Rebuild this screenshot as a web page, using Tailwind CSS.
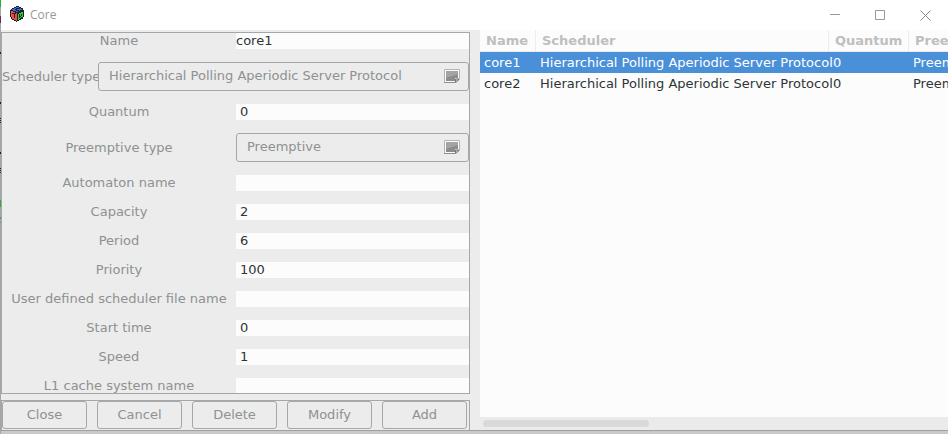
<!DOCTYPE html>
<html lang="en">
<head>
<meta charset="utf-8">
<meta name="viewport" content="width=device-width, initial-scale=1">
<title>Core</title>
<script src="https://cdn.jsdelivr.net/npm/@tailwindcss/browser@4"></script>
</head>
<body class="h-screen overflow-hidden bg-[#c9c9c9] font-['DejaVu_Sans',sans-serif] text-[13px] leading-4 text-[#8e9192]">
<svg class="absolute left-0 top-0 z-10 h-[434px] w-px" viewBox="0 0 1 434" preserveAspectRatio="none" shape-rendering="crispEdges" aria-hidden="true">
  <path fill="#a6a6a6" d="M0 0h1v434H0z"/>
  <path fill="#2bb02b" d="M0 0h1v7H0zM0 200h1v7H0z"/>
  <path fill="#6b2860" d="M0 16h1v7H0z"/>
  <path fill="#222" d="M0 52h1v2H0zM0 102h1v2H0zM0 118h1v1H0zM0 120h1v1H0zM0 122h1v1H0zM0 152h1v2H0zM0 168h1v1H0zM0 170h1v1H0zM0 172h1v1H0z"/>
  <path fill="#4b8db5" d="M0 217h1v2H0zM0 222h1v1H0z"/>
</svg>
<div class="flex h-full flex-col pb-[3px] pl-px">
  <header class="flex h-[30px] shrink-0 items-center bg-white pl-2">
    <svg class="-mt-[2px] h-4 w-4" viewBox="0 0 16 16" shape-rendering="crispEdges" aria-hidden="true">
      <path fill="#1d2228" d="M7 0h3v1h2v1h2v2h1v7h-1v2h-2v1h-2v1H8v1H7v-1H5v-1H3v-1H2v-2H1V4h1V3h1V2h2V1h2z"/>
      <path fill="#3d6fd6" d="M7 1h3v1h2v1h1v1h-2v1H9v1H7V5H4V4H3V3h2V2h2z"/>
      <path fill="#15234a" d="M7 2h4v1H8v1h2v1H7V4H6V3h1z"/>
      <path fill="#e8504b" d="M2 5h2v1h2v1h2v8H7v-1H5v-1H3v-2H2z"/>
      <path fill="#4b1212" d="M3 7h4v1H6v4H5V8H3z"/>
      <path fill="#2fd236" d="M9 8h1V7h2V6h2v5h-1v1h-2v1h-1v1H9z"/>
      <path fill="#123c16" d="M10 8h1v2h1V8h1v2h-1v1h1v1h-1v-1h-1v1h-1z"/>
    </svg>
    <h1 class="ml-[5px] flex-1 font-['Open_Sans','Noto_Sans',sans-serif] text-[12px] font-normal text-[#999]">Core</h1>
    <button type="button" aria-label="Minimize" class="flex h-full w-[45px] items-center justify-center">
      <svg class="h-[11px] w-[11px]" viewBox="0 0 11 11" fill="none" stroke="#999"><path d="M0 4.500h10"/></svg>
    </button>
    <button type="button" aria-label="Maximize" class="flex h-full w-[45px] items-center justify-center">
      <svg class="h-[11px] w-[11px]" viewBox="0 0 11 11" fill="none" stroke="#999"><path d="M.5.5h9v9h-9z"/></svg>
    </button>
    <button type="button" aria-label="Close window" class="flex h-full w-[45px] items-center justify-center">
      <svg class="h-[11px] w-[11px]" viewBox="0 0 11 11" fill="none" stroke="#888"><path d="M.5.5l10 10M10.500.5l-10 10"/></svg>
    </button>
  </header>

  <main class="flex min-h-0 flex-1 gap-[10px] border-b border-[#a0a0a0] bg-[#ececec]">
    <form class="flex w-[469px] shrink-0 flex-col gap-[6px] pt-[2px]">
      <div class="flex min-h-0 flex-1 flex-col gap-[13px] overflow-hidden border border-[#a6a8a8]">
        <div class="flex shrink-0 items-center"><label for="name" class="flex-1 text-center">Name</label><input id="name" value="core1" class="h-4 w-[233px] bg-[#fcfcfc] text-[#2e3436] outline-none"></div>
        <div class="flex shrink-0 items-center">
          <label for="sched" class="w-24 shrink-0 whitespace-nowrap">Scheduler type</label>
          <div class="relative flex-1">
            <select id="sched" class="block h-[29px] w-full appearance-none rounded-[3px] border border-[#a6a8a8] bg-[#ececec] px-[10px] pb-[2px] text-[#8e9192] outline-none"><option>Hierarchical Polling Aperiodic Server Protocol</option></select>
            <svg class="pointer-events-none absolute right-[9px] top-[7px] h-[15px] w-4" viewBox="0 0 16 15" aria-hidden="true"><path fill="#fafafa" stroke="#b4b6b4" d="M.5.5h15v10l-3 3H.5z"/><path fill="#8a8d8b" d="M2 2h12v7h-3v3H2z"/><path fill="#a2a5a3" d="M2 2h12v3L2 9z"/><path fill="#d4d6d4" stroke="#737573" d="M11.500 13v-3h3.500z"/><path stroke="#8d8f8d" d="M0 13.500h12"/></svg>
          </div>
        </div>
        <div class="flex shrink-0 items-center"><label for="quantum" class="flex-1 text-center">Quantum</label><input id="quantum" value="0" class="h-4 w-[233px] bg-[#fcfcfc] px-1 text-[#2e3436] outline-none"></div>
        <div class="flex shrink-0 items-center">
          <label for="preempt" class="flex-1 text-center">Preemptive type</label>
          <div class="relative w-[233px]">
            <select id="preempt" class="block h-[29px] w-full appearance-none rounded-[3px] border border-[#a6a8a8] bg-[#ececec] px-[10px] pb-[2px] text-[#8e9192] outline-none"><option>Preemptive</option></select>
            <svg class="pointer-events-none absolute right-[9px] top-[7px] h-[15px] w-4" viewBox="0 0 16 15" aria-hidden="true"><path fill="#fafafa" stroke="#b4b6b4" d="M.5.5h15v10l-3 3H.5z"/><path fill="#8a8d8b" d="M2 2h12v7h-3v3H2z"/><path fill="#a2a5a3" d="M2 2h12v3L2 9z"/><path fill="#d4d6d4" stroke="#737573" d="M11.500 13v-3h3.500z"/><path stroke="#8d8f8d" d="M0 13.500h12"/></svg>
          </div>
        </div>
        <div class="flex shrink-0 items-center"><label for="automaton" class="flex-1 text-center">Automaton name</label><input id="automaton" class="h-4 w-[233px] bg-[#fcfcfc] px-1 text-[#2e3436] outline-none"></div>
        <div class="flex shrink-0 items-center"><label for="capacity" class="flex-1 text-center">Capacity</label><input id="capacity" value="2" class="h-4 w-[233px] bg-[#fcfcfc] px-1 text-[#2e3436] outline-none"></div>
        <div class="flex shrink-0 items-center"><label for="period" class="flex-1 text-center">Period</label><input id="period" value="6" class="h-4 w-[233px] bg-[#fcfcfc] px-1 text-[#2e3436] outline-none"></div>
        <div class="flex shrink-0 items-center"><label for="priority" class="flex-1 text-center">Priority</label><input id="priority" value="100" class="h-4 w-[233px] bg-[#fcfcfc] px-1 text-[#2e3436] outline-none"></div>
        <div class="flex shrink-0 items-center"><label for="userfile" class="flex-1 text-center">User defined scheduler file name</label><input id="userfile" class="h-4 w-[233px] bg-[#fcfcfc] px-1 text-[#2e3436] outline-none"></div>
        <div class="flex shrink-0 items-center"><label for="start" class="flex-1 text-center">Start time</label><input id="start" value="0" class="h-4 w-[233px] bg-[#fcfcfc] px-1 text-[#2e3436] outline-none"></div>
        <div class="flex shrink-0 items-center"><label for="speed" class="flex-1 text-center">Speed</label><input id="speed" value="1" class="h-4 w-[233px] bg-[#fcfcfc] px-1 text-[#2e3436] outline-none"></div>
        <div class="flex shrink-0 items-center"><label for="cache" class="flex-1 text-center">L1 cache system name</label><input id="cache" class="h-4 w-[233px] bg-[#fcfcfc] px-1 text-[#2e3436] outline-none"></div>
      </div>
      <div class="flex shrink-0 gap-[10px] border border-b-0 border-[#a6a8a8] pb-px pr-[2px]">
        <button type="button" class="h-7 flex-1 rounded-[3px] border border-[#a6a8a8]">Close</button>
        <button type="button" class="h-7 flex-1 rounded-[3px] border border-[#a6a8a8]">Cancel</button>
        <button type="button" class="h-7 flex-1 rounded-[3px] border border-[#a6a8a8]">Delete</button>
        <button type="button" class="h-7 flex-1 rounded-[3px] border border-[#a6a8a8]">Modify</button>
        <button type="button" class="h-7 flex-1 rounded-[3px] border border-[#a6a8a8]">Add</button>
      </div>
    </form>

    <section class="flex min-w-0 flex-1 flex-col">
      <div class="min-h-0 flex-1 overflow-hidden bg-[#fcfcfc]">
        <table class="w-[520px] table-fixed border-separate border-spacing-0 whitespace-nowrap text-left text-[#2e3436]">
          <colgroup><col class="w-[56px]"><col class="w-[293px]"><col class="w-[80px]"><col></colgroup>
          <thead>
            <tr class="h-[22px] text-[#bebfbf]">
              <th class="border-b border-r border-[#ececec] p-0 pl-[6px] font-bold">Name</th>
              <th class="border-b border-r border-[#ececec] p-0 pl-[6px] font-bold">Scheduler</th>
              <th class="border-b border-r border-[#ececec] p-0 pl-[6px] font-bold">Quantum</th>
              <th class="border-b border-[#ececec] p-0 pl-[6px] font-bold">Preemptive</th>
            </tr>
          </thead>
          <tbody>
            <tr class="h-[21px] bg-[#4a90d9] text-white"><td class="p-0 pl-1">core1</td><td class="p-0 pl-1">Hierarchical Polling Aperiodic Server Protocol</td><td class="p-0 pl-1">0</td><td class="p-0 pl-1">Preemptive</td></tr>
            <tr class="h-[21px]"><td class="p-0 pl-1">core2</td><td class="p-0 pl-1">Hierarchical Polling Aperiodic Server Protocol</td><td class="p-0 pl-1">0</td><td class="p-0 pl-1">Preemptive</td></tr>
          </tbody>
        </table>
      </div>
      <div class="h-[13px] shrink-0 bg-[#ebebeb] px-[3px] pt-[3px]"><div class="h-[7px] w-[36%] rounded-full bg-[#d8dad9]"></div></div>
    </section>
  </main>
</div>
</body>
</html>
